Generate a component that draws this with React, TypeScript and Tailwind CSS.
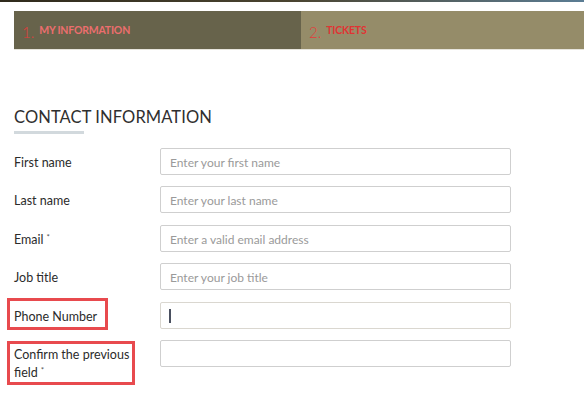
const fields = [
	{ label: 'First name', placeholder: 'Enter your first name' },
	{ label: 'Last name', placeholder: 'Enter your last name' },
	{ label: 'Email', placeholder: 'Enter a valid email address', required: true },
	{ label: 'Job title', placeholder: 'Enter your job title' },
];

const StepTab = ({ num, title, dark }: { num: string; title: string; dark?: boolean }) => {
	return (
		<div
			className={`flex items-center h-full pl-[8px] ${
				dark ? 'w-[287px] bg-[#67634b]' : 'flex-1 bg-[#958c69]'
			}`}
		>
			<span className="text-[15px] font-light text-[#e23b3b] leading-none mt-[4px] mr-[5px]">
				{num}
			</span>
			<span
				className={`text-[10.5px] font-bold tracking-[-0.2px] leading-none ${
					dark ? 'text-[#ec6e6e]' : 'text-[#e03434]'
				}`}
			>
				{title}
			</span>
		</div>
	);
};

const TextInput = ({ placeholder, focused }: { placeholder?: string; focused?: boolean }) => {
	return (
		<div
			className={`relative w-[351px] h-[27px] rounded-[2px] border bg-white ${
				focused ? 'border-[#dad7d0]' : 'border-[#cfcfcf]'
			}`}
		>
			<input
				placeholder={placeholder}
				className="w-full h-full px-[9px] text-[12px] text-[#333] placeholder:text-[#9a9a9a] outline-none bg-transparent"
			/>
			{focused && <span className="absolute left-[8px] top-[6px] w-[1.5px] h-[14px] bg-[#4a5060]" />}
		</div>
	);
};

const Star = () => (
	<span className="relative top-[-4px] text-[8px] leading-none ml-[3px] text-[#555]">*</span>
);

export default function App() {
	return (
		<div className="w-[584px] h-[401px] bg-white overflow-hidden font-['Lato','Open_Sans',sans-serif] text-[#2b2b2b]">
			<div className="h-[2px] bg-gradient-to-r from-[#2f2a1c] via-[#4a4430] to-[#5b7d94]" />

			<div className="flex h-[39px] ml-[14px] mt-[9px] border-b border-[#e6e4dc]">
				<StepTab num="1." title="MY INFORMATION" dark />
				<StepTab num="2." title="TICKETS" />
			</div>

			<div className="px-[14px]">
				<h2 className="mt-[56px] text-[16.5px] leading-[22px] tracking-[0.1px] text-[#2f2f2f]">
					CONTACT INFORMATION
				</h2>
				<div className="mt-[3px] w-[70px] h-[3px] bg-[#d2d9dd]" />

				<div className="mt-[14px] flex flex-col gap-[11.4px]">
					{fields.map((f) => (
						<div key={f.label} className="flex items-start">
							<label className="w-[146px] pt-[6px] text-[12.5px] leading-[18px]">
								{f.label}
								{f.required && <Star />}
							</label>
							<TextInput placeholder={f.placeholder} />
						</div>
					))}

					<div className="flex items-start">
						<label className="relative w-[146px] pt-[6px] text-[12.5px] leading-[18px]">
							Phone Number
							<span className="absolute left-[-7px] top-[-4px] w-[101px] h-[32px] border-[3px] border-[#e84a4e]" />
						</label>
						<TextInput focused />
					</div>

					<div className="flex items-start">
						<label className="relative w-[146px] pt-[6px] text-[12.5px] leading-[18px]">
							<span className="block w-[122px]">
								Confirm the previous field
								<Star />
							</span>
							<span className="absolute left-[-7px] top-[1px] w-[128px] h-[44px] border-[3px] border-[#e84a4e]" />
						</label>
						<TextInput />
					</div>
				</div>
			</div>
		</div>
	);
}
